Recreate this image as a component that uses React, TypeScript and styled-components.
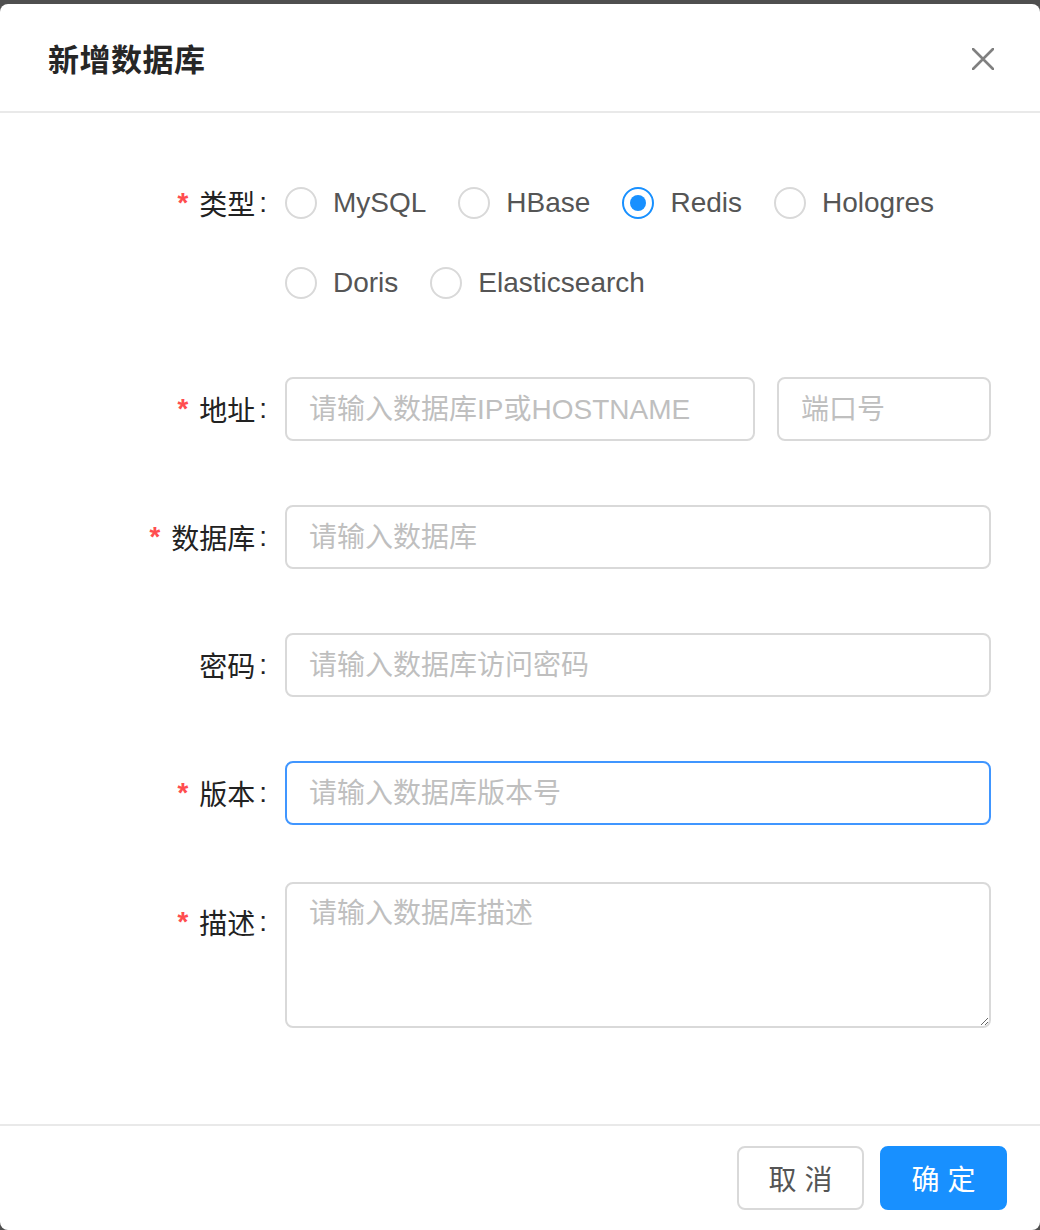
import React, { useState } from 'react'
import styled, { createGlobalStyle, css } from 'styled-components'

const FONT = `"Helvetica Neue", "Liberation Sans", Arial, "Noto Sans CJK SC", sans-serif`

const GlobalStyle = createGlobalStyle`
  html, body {
    margin: 0;
    padding: 0;
    background: #4f4f4f;
    font-family: ${FONT};
  }

  * {
    box-sizing: border-box;
  }
`

const Modal = styled.div`
  margin-top: 4px;
  width: 1040px;
  height: 1226px;
  background: #ffffff;
  border-radius: 8px;
  display: flex;
  flex-direction: column;
  overflow: hidden;
`

const Header = styled.div`
  display: flex;
  align-items: center;
  justify-content: space-between;
  height: 109px;
  padding: 2px 42px 0 48px;
  border-bottom: 2px solid #e9e9e9;
  flex-shrink: 0;
`

const Title = styled.div`
  font-size: 31px;
  font-weight: 700;
  color: #262626;
  letter-spacing: 0.5px;
  margin-top: -2px;
`

const CloseButton = styled.button`
  width: 30px;
  height: 30px;
  border: none;
  background: none;
  padding: 0;
  display: flex;
  align-items: center;
  justify-content: center;
  cursor: pointer;
`

const Body = styled.form`
  flex: 1;
  padding: 58px 49px 0 0;
`

const FormItem = styled.div<{ $gap?: number }>`
  display: grid;
  grid-template-columns: 285px 1fr;
  margin-bottom: ${({ $gap }) => ($gap ?? 64)}px;
`

const Label = styled.label<{ $offset?: number }>`
  display: flex;
  justify-content: flex-end;
  align-items: center;
  height: 64px;
  margin-top: ${({ $offset }) => $offset ?? 0}px;
  padding-right: 16px;
  font-size: 28px;
  color: #222222;
  white-space: nowrap;
`

const Required = styled.span`
  color: #ff4d4f;
  font-family: "Liberation Mono", monospace;
  font-size: 28px;
  font-weight: 700;
  margin-right: 8px;
  margin-top: 4px;
`

const Colon = styled.span`
  margin-left: 4px;
  margin-right: 2px;
  font-family: "Liberation Sans", Arial, sans-serif;
`

const RadioGroup = styled.div`
  display: flex;
  flex-wrap: wrap;
  row-gap: 16px;
`

const RadioOption = styled.label`
  display: flex;
  align-items: center;
  height: 64px;
  margin-right: 16px;
  cursor: pointer;
`

const RadioCircle = styled.span<{ $checked: boolean }>`
  width: 32px;
  height: 32px;
  border-radius: 50%;
  border: 2px solid ${({ $checked }) => ($checked ? '#1890ff' : '#d9d9d9')};
  display: flex;
  align-items: center;
  justify-content: center;
  flex-shrink: 0;

  ${({ $checked }) =>
    $checked &&
    css`
      &::after {
        content: '';
        width: 16px;
        height: 16px;
        border-radius: 50%;
        background: #1890ff;
      }
    `}
`

const RadioText = styled.span`
  padding: 0 16px;
  font-size: 28px;
  color: #555555;
`

const Fields = styled.div`
  display: flex;
  gap: 22px;
`

const fieldBase = css<{ $focused?: boolean }>`
  width: 100%;
  border: 2px solid ${({ $focused }) => ($focused ? '#4096ff' : '#d9d9d9')};
  border-radius: 8px;
  font-family: ${FONT};
  font-size: 28px;
  color: #262626;
  background: #ffffff;
  outline: none;

  &::placeholder {
    color: #bfbfbf;
  }
`

const Input = styled.input<{ $focused?: boolean; $width?: number }>`
  ${fieldBase};
  height: 64px;
  padding: 2px 22px 0;
  ${({ $width }) =>
    $width &&
    css`
      width: ${$width}px;
      flex-shrink: 0;
    `}
`

const TextArea = styled.textarea<{ $focused?: boolean }>`
  ${fieldBase};
  display: block;
  height: 146px;
  padding: 8px 22px;
  line-height: 44px;
  resize: vertical;
`

const Footer = styled.div`
  display: flex;
  justify-content: flex-end;
  gap: 16px;
  padding: 20px 33px 0 0;
  height: 106px;
  border-top: 2px solid #e9e9e9;
  flex-shrink: 0;
`

const Button = styled.button<{ $primary?: boolean }>`
  width: 127px;
  height: 64px;
  border-radius: 8px;
  font-family: ${FONT};
  font-size: 28px;
  letter-spacing: 8px;
  padding: 0 0 0 8px;
  cursor: pointer;
  border: 2px solid ${({ $primary }) => ($primary ? '#1890ff' : '#d9d9d9')};
  background: ${({ $primary }) => ($primary ? '#1890ff' : '#ffffff')};
  color: ${({ $primary }) => ($primary ? '#ffffff' : '#555555')};
`

const TYPES = ['MySQL', 'HBase', 'Redis', 'Hologres', 'Doris', 'Elasticsearch']

const CloseIcon = () => (
  <svg width="22" height="22" viewBox="0 0 22 22">
    <path
      d="M1 1L21 21M21 1L1 21"
      stroke="#808080"
      strokeWidth="2.6"
      strokeLinecap="round"
    />
  </svg>
)

const FieldLabel = ({
  text,
  required,
  offset
}: {
  text: string
  required?: boolean
  offset?: number
}) => (
  <Label $offset={offset}>
    {required && <Required>*</Required>}
    {text}
    <Colon>:</Colon>
  </Label>
)

const App = () => {
  const [type, setType] = useState('Redis')

  return (
    <>
      <GlobalStyle />
      <Modal>
        <Header>
          <Title>新增数据库</Title>
          <CloseButton type="button" aria-label="close">
            <CloseIcon />
          </CloseButton>
        </Header>
        <Body onSubmit={e => e.preventDefault()}>
          <FormItem $gap={62}>
            <FieldLabel text="类型" required />
            <RadioGroup>
              {TYPES.map(item => (
                <RadioOption key={item} onClick={() => setType(item)}>
                  <RadioCircle $checked={type === item} />
                  <RadioText>{item}</RadioText>
                </RadioOption>
              ))}
            </RadioGroup>
          </FormItem>
          <FormItem>
            <FieldLabel text="地址" required />
            <Fields>
              <Input placeholder="请输入数据库IP或HOSTNAME" />
              <Input placeholder="端口号" $width={214} />
            </Fields>
          </FormItem>
          <FormItem>
            <FieldLabel text="数据库" required />
            <Input placeholder="请输入数据库" />
          </FormItem>
          <FormItem>
            <FieldLabel text="密码" />
            <Input placeholder="请输入数据库访问密码" />
          </FormItem>
          <FormItem $gap={57}>
            <FieldLabel text="版本" required />
            <Input placeholder="请输入数据库版本号" $focused />
          </FormItem>
          <FormItem $gap={0}>
            <FieldLabel text="描述" required offset={8} />
            <TextArea placeholder="请输入数据库描述" />
          </FormItem>
        </Body>
        <Footer>
          <Button type="button">取消</Button>
          <Button type="button" $primary>
            确定
          </Button>
        </Footer>
      </Modal>
    </>
  )
}

export default App
